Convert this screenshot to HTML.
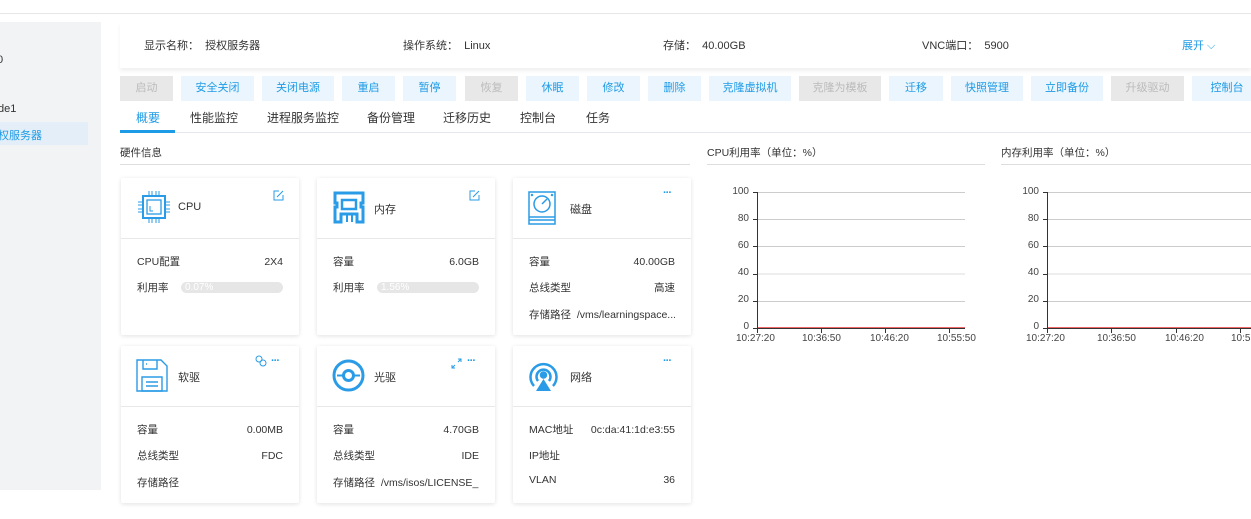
<!DOCTYPE html>
<html><head><meta charset="utf-8"><style>
*{margin:0;padding:0;box-sizing:border-box}
body{width:1251px;height:519px;background:#fff;font-family:"Liberation Sans","Noto Sans CJK SC",sans-serif;font-size:11px;color:#333;position:relative;overflow:hidden}
.a{position:absolute;white-space:nowrap}
.btn{position:absolute;top:76px;height:25px;line-height:25px;text-align:center;background:#eaf5fd;color:#1e9be6;font-size:11px}
.btn.d{background:#e8e8e8;color:#bbb}
.card{position:absolute;width:178px;height:157px;background:#fff;box-shadow:0 1px 5px rgba(0,0,0,.12);border-radius:2px}
.card .hd{height:61px;border-bottom:1px solid #e8e8e8;position:relative}
.card .t{position:absolute;left:57px;top:23px;font-size:11px}
.card .r{position:absolute;left:16px;right:16px;font-size:10.5px;display:flex;justify-content:space-between;white-space:nowrap;overflow:hidden;line-height:14px}
.dots{position:absolute;top:9px;right:20px;color:#1e9be6;font-size:11px;letter-spacing:-1px;font-weight:bold}
.bar{position:absolute;left:44px;width:102px;height:11px;background:#e6e6e6;border-radius:6px;color:#fff;font-size:10px;line-height:11px;padding-left:4px;top:1px}
.yl{position:absolute;font-size:10px;color:#444;text-align:right;width:24px}
.xl{position:absolute;font-size:10px;color:#444}
</style></head><body>
<div class="a" style="left:0;top:13px;width:1251px;height:1px;background:#e6e6e6"></div>
<div class="a" style="left:0;top:22px;width:101px;height:468px;background:#f2f3f5"></div>
<div class="a" style="left:0;top:122px;width:88px;height:23px;background:#e3eef8"></div>
<div class="a" style="left:-3px;top:54px;font-size:11px">0</div>
<div class="a" style="left:-2px;top:103px;font-size:11px">de1</div>
<div class="a" style="left:-2px;top:127px;font-size:11px;color:#1e9be6">权服务器</div>

<div class="a" style="left:120px;top:22px;width:1131px;height:46px;box-shadow:0 3px 4px rgba(0,0,0,.06)"></div>
<div class="a" style="left:144px;top:37px">显示名称：&nbsp; 授权服务器</div>
<div class="a" style="left:403px;top:37px">操作系统：&nbsp; Linux</div>
<div class="a" style="left:663px;top:37px">存储：&nbsp; 40.00GB</div>
<div class="a" style="left:922px;top:37px">VNC端口：&nbsp; 5900</div>
<div class="a" style="left:1182px;top:37px;color:#1e9be6">展开 ⌵</div>

<div class="btn d" style="left:120px;width:53px">启动</div>
<div class="btn" style="left:181px;width:73px">安全关闭</div>
<div class="btn" style="left:262px;width:72px">关闭电源</div>
<div class="btn" style="left:342px;width:53px">重启</div>
<div class="btn" style="left:403px;width:53px">暂停</div>
<div class="btn d" style="left:465px;width:53px">恢复</div>
<div class="btn" style="left:526px;width:53px">休眠</div>
<div class="btn" style="left:587px;width:53px">修改</div>
<div class="btn" style="left:648px;width:53px">删除</div>
<div class="btn" style="left:709px;width:82px">克隆虚拟机</div>
<div class="btn d" style="left:799px;width:82px">克隆为模板</div>
<div class="btn" style="left:889px;width:54px">迁移</div>
<div class="btn" style="left:951px;width:72px">快照管理</div>
<div class="btn" style="left:1031px;width:72px">立即备份</div>
<div class="btn d" style="left:1111px;width:73px">升级驱动</div>
<div class="btn" style="left:1192px;width:70px">控制台</div>

<div class="a" style="left:120px;top:132px;width:1131px;height:1px;background:#e4e7ed"></div>
<div class="a" style="left:120px;top:130px;width:55px;height:3px;background:#1e9be6"></div>
<div class="a" style="left:136px;top:109px;font-size:12px;color:#1e9be6">概要</div>
<div class="a" style="left:190px;top:109px;font-size:12px">性能监控</div>
<div class="a" style="left:267px;top:109px;font-size:12px">进程服务监控</div>
<div class="a" style="left:367px;top:109px;font-size:12px">备份管理</div>
<div class="a" style="left:443px;top:109px;font-size:12px">迁移历史</div>
<div class="a" style="left:520px;top:109px;font-size:12px">控制台</div>
<div class="a" style="left:586px;top:109px;font-size:12px">任务</div>

<div class="a" style="left:120px;top:145px;font-size:10.5px">硬件信息</div>
<div class="a" style="left:120px;top:164px;width:570px;height:1px;background:#ddd"></div>
<div class="a" style="left:707px;top:145px;font-size:10.5px">CPU利用率（单位：%）</div>
<div class="a" style="left:707px;top:164px;width:278px;height:1px;background:#ddd"></div>
<div class="a" style="left:1001px;top:145px;font-size:10.5px">内存利用率（单位：%）</div>
<div class="a" style="left:1001px;top:164px;width:250px;height:1px;background:#ddd"></div>

<!-- cards row1 -->
<div class="card" style="left:121px;top:178px"><div class="hd">
<svg class="a" style="left:16px;top:12px" width="34" height="34" viewBox="0 0 34 34" fill="none" stroke="#2a9be6" stroke-width="1.3"><rect x="6" y="6" width="22" height="22" stroke-width="2"/><rect x="10" y="10" width="14" height="14"/><path d="M13 16v5h3M12 1v5M15 1v5M19 1v5M22 1v5M12 28v5M15 28v5M19 28v5M22 28v5M1 12h5M1 15h5M1 19h5M1 22h5M28 12h5M28 15h5M28 19h5M28 22h5" stroke-width="1"/></svg>
<div class="t">CPU</div>
<svg class="a" style="left:152px;top:12px" width="11" height="11" viewBox="0 0 11 11" fill="none" stroke="#2a9be6"><path d="M6 1H1v9h9V5M4 7l6-6"/></svg></div>
<div class="r" style="top:77px">CPU配置<span>2X4</span></div>
<div class="r" style="top:103px;overflow:visible">利用率<div class="bar">0.07%</div></div></div>

<div class="card" style="left:317px;top:178px"><div class="hd">
<svg class="a" style="left:16px;top:13px" width="32" height="33" viewBox="0 0 32 33" fill="none" stroke="#2a9be6" stroke-width="3"><path d="M2 2h28v10h-2v4h2v15h-6v-8H8v8H2V16h2v-4H2z"/><path d="M9 9h14v9H9z" stroke-width="2.5"/><path d="M14 23v8M19 23v8" stroke-width="2"/></svg>
<div class="t">内存</div>
<svg class="a" style="left:152px;top:12px" width="11" height="11" viewBox="0 0 11 11" fill="none" stroke="#2a9be6"><path d="M6 1H1v9h9V5M4 7l6-6"/></svg></div>
<div class="r" style="top:77px">容量<span>6.0GB</span></div>
<div class="r" style="top:103px;overflow:visible">利用率<div class="bar">1.56%</div></div></div>

<div class="card" style="left:513px;top:178px"><div class="hd">
<svg class="a" style="left:15px;top:13px" width="28" height="34" viewBox="0 0 28 34" fill="none" stroke="#2a9be6" stroke-width="1.5"><rect x="1" y="1" width="26" height="32"/><path d="M1 26h26M1 29h26" /><circle cx="14" cy="13" r="8"/><path d="M14 13l5-5"/><circle cx="4" cy="4" r=".5"/><circle cx="24" cy="4" r=".5"/></svg>
<div class="t">磁盘</div><div class="dots">···</div></div>
<div class="r" style="top:77px">容量<span>40.00GB</span></div>
<div class="r" style="top:103px">总线类型<span>高速</span></div>
<div class="r" style="top:130px;justify-content:flex-start">存储路径 &nbsp;/vms/learningspace...</div></div>

<!-- row2 -->
<div class="card" style="left:121px;top:346px"><div class="hd">
<svg class="a" style="left:15px;top:13px" width="32" height="33" viewBox="0 0 32 33" fill="none" stroke="#2a9be6" stroke-width="1.4"><path d="M1 1h24l6 6v25H1z"/><path d="M7 1v9h14V1M10 5h1M6 18h20v14H6zM10 23h12M10 27h12"/></svg>
<div class="t">软驱</div>
<svg class="a" style="left:134px;top:9px" width="12" height="12" viewBox="0 0 12 12" fill="none" stroke="#2a9be6"><circle cx="4" cy="4" r="3"/><circle cx="8" cy="8" r="3"/></svg><div class="dots">···</div></div>
<div class="r" style="top:77px">容量<span>0.00MB</span></div>
<div class="r" style="top:103px">总线类型<span>FDC</span></div>
<div class="r" style="top:130px">存储路径</div></div>

<div class="card" style="left:317px;top:346px"><div class="hd">
<svg class="a" style="left:15px;top:13px" width="33" height="33" viewBox="0 0 33 33" fill="none" stroke="#2a9be6"><circle cx="16.5" cy="16.5" r="14.5" stroke-width="3"/><circle cx="16.5" cy="16.5" r="5" stroke-width="3"/><path d="M5 16.5h6M22 16.5h6" stroke-width="2"/></svg>
<div class="t">光驱</div>
<svg class="a" style="left:134px;top:12px" width="11" height="11" viewBox="0 0 11 11" fill="none" stroke="#2a9be6"><path d="M1 10l3-3M7 4l3-3M1 7v3h3M7 1h3v3"/></svg><div class="dots">···</div></div>
<div class="r" style="top:77px">容量<span>4.70GB</span></div>
<div class="r" style="top:103px">总线类型<span>IDE</span></div>
<div class="r" style="top:130px;justify-content:flex-start">存储路径 &nbsp;/vms/isos/LICENSE_...</div></div>

<div class="card" style="left:513px;top:346px"><div class="hd">
<svg class="a" style="left:15px;top:13px" width="31" height="34" viewBox="0 0 31 34" fill="none" stroke="#2a9be6" stroke-width="2.5"><path d="M6 27A13 13 0 1 1 25 27"/><path d="M10 22A7 7 0 1 1 21 22"/><circle cx="15.5" cy="16" r="2.5" fill="#2a9be6"/><path d="M15.5 20L8 32h15z" fill="#2a9be6" stroke="none"/></svg>
<div class="t">网络</div><div class="dots">···</div></div>
<div class="r" style="top:77px">MAC地址<span>0c:da:41:1d:e3:55</span></div>
<div class="r" style="top:103px">IP地址</div>
<div class="r" style="top:127px">VLAN<span>36</span></div></div>

<!-- charts -->
<svg class="a" style="left:700px;top:180px" width="551" height="170">
<g stroke="#ccc" stroke-width="1">
<path d="M57 12.5H265M57 39.5H265M57 66.5H265M57 121.5H265" /><path d="M57 94H265" stroke="#eee" stroke-width="2"/>
<path d="M347 12.5H551M347 39.5H551M347 66.5H551M347 121.5H551"/><path d="M347 94H551" stroke="#eee" stroke-width="2"/>
</g>
<g stroke="#333"><path d="M57.5 12v137M53 12.5h4M53 39.5h4M53 66.5h4M53 94.5h4M53 121.5h4M53 148.5h4M57 148.5H265M57.5 149v4M121.5 149v4M185.5 149v4M249.5 149v4"/>
<path d="M347.5 12v137M343 12.5h4M343 39.5h4M343 66.5h4M343 94.5h4M343 121.5h4M343 148.5h4M347 148.5H551M347.5 149v4M411.5 149v4M476.5 149v4M540.5 149v4"/></g>
<path d="M58 147.5H265M348 147.5H551" stroke="#e66" />
</svg>
<div class="yl" style="left:725px;top:186px">100</div><div class="yl" style="left:725px;top:213px">80</div><div class="yl" style="left:725px;top:240px">60</div><div class="yl" style="left:725px;top:267px">40</div><div class="yl" style="left:725px;top:294px">20</div><div class="yl" style="left:725px;top:321px">0</div>
<div class="yl" style="left:1015px;top:186px">100</div><div class="yl" style="left:1015px;top:213px">80</div><div class="yl" style="left:1015px;top:240px">60</div><div class="yl" style="left:1015px;top:267px">40</div><div class="yl" style="left:1015px;top:294px">20</div><div class="yl" style="left:1015px;top:321px">0</div>
<div class="xl" style="left:736px;top:333px">10:27:20</div><div class="xl" style="left:802px;top:333px">10:36:50</div><div class="xl" style="left:870px;top:333px">10:46:20</div><div class="xl" style="left:937px;top:333px">10:55:50</div>
<div class="xl" style="left:1026px;top:333px">10:27:20</div><div class="xl" style="left:1097px;top:333px">10:36:50</div><div class="xl" style="left:1165px;top:333px">10:46:20</div><div class="xl" style="left:1231px;top:333px">10:55:50</div>
</body></html>
